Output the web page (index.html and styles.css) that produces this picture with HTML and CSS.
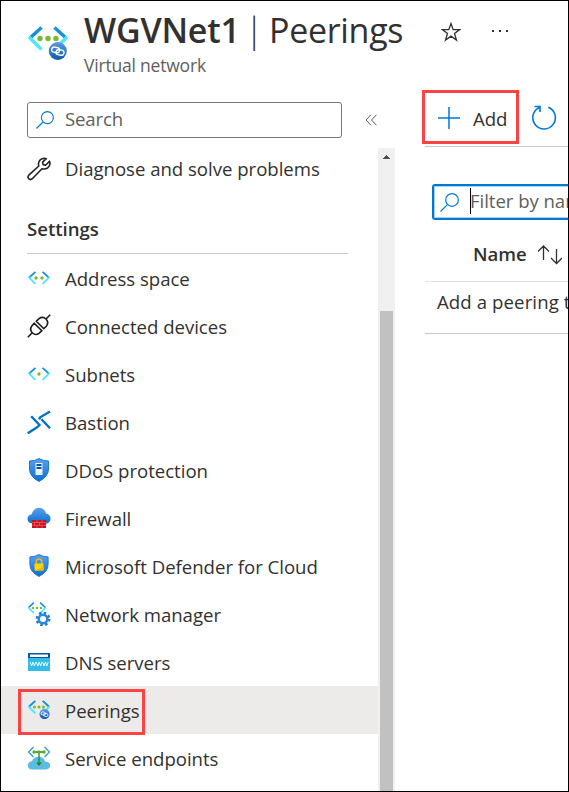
FILE: index.html
```html
<!DOCTYPE html>
<html lang="en">
<head>
<meta charset="utf-8">
<title>WGVNet1 | Peerings</title>
<link rel="stylesheet" href="styles.css">
</head>
<body>
<svg class="defs" width="0" height="0">
  <defs>
    <linearGradient id="blue" x1="0" y1="0" x2="0" y2="1"><stop offset="0" stop-color="#5ea0ef"/><stop offset="1" stop-color="#0a6fd0"/></linearGradient>
    <linearGradient id="badge" x1="0" y1="0" x2="0" y2="1"><stop offset="0" stop-color="#5b9be6"/><stop offset="1" stop-color="#0c59a4"/></linearGradient>
    <symbol id="search" viewBox="0 0 18 18"><g fill="none" stroke="#0078d4" stroke-width="1.1"><circle cx="11.4" cy="6.6" r="6"/><path d="M7 11L.5 17.5"/></g></symbol>
    <symbol id="brackets" viewBox="0 0 40 26"><g fill="none" stroke-width="3.4"><path d="M13.5 1.5L2 12" stroke="#1490df"/><path d="M1 11L13.5 23.5" stroke="#50e6ff"/><path d="M26.500 1.500L38 12" stroke="#1490df"/><path d="M39 11L26.500 23.500" stroke="#50e6ff"/></g></symbol>
    <symbol id="peering" viewBox="0 0 40 34"><use href="#brackets" width="40" height="26"/><g fill="#76bc2d"><circle cx="12" cy="12.500" r="2.700"/><circle cx="20" cy="12.500" r="2.700"/><circle cx="28" cy="12.500" r="2.700"/></g><circle cx="29.800" cy="25" r="9" fill="url(#badge)"/><g fill="none" stroke="#fff" stroke-width="1.400"><rect x="23.600" y="21.300" width="8" height="5.200" rx="2.600" transform="rotate(12 27.600 23.900)"/><rect x="28" y="23.800" width="8" height="5.200" rx="2.600" transform="rotate(12 32 26.400)"/></g></symbol>
    <symbol id="shield" viewBox="0 0 20 24"><path d="M10 .5Q14 3 19.500 3v8Q19.500 18.500 10 23.500Q.5 18.500.5 11V3Q6 3 10 .5Z" fill="url(#blue)" stroke="#1679d2"/></symbol>
  </defs>
</svg>
<div class="frame">
  <header class="header">
    <svg class="logo" width="40" height="34"><use href="#peering" width="40" height="34"/></svg>
    <div class="heading">
      <h1 class="title"><span class="name">WGVNet1</span><span class="bar">|</span><span class="section">Peerings</span></h1>
      <div class="kind">Virtual network</div>
    </div>
    <svg class="star" width="20" height="20" viewBox="0 0 20 20"><path d="M10 1.500L12.200 7.600H18.700L13.500 11.500L15.500 18L10 14.100L4.500 18L6.500 11.500L1.300 7.600H7.800Z" fill="none" stroke="#323130" stroke-width="1.300"/></svg>
    <svg class="more" width="18" height="4"><path d="M1 1h2v2H1zM8 1h2v2H8zM15 1h2v2h-2z" fill="#323130"/></svg>
  </header>
  <div class="body">
    <aside class="sidebar">
      <div class="searchrow">
        <div class="search"><svg width="18" height="18"><use href="#search"/></svg><span class="hint">Search</span></div>
        <svg class="collapse" width="12" height="12" viewBox="0 0 12 12"><path d="M6 .7L1 6l5 5.300M11.500.7l-5 5.300 5 5.300" fill="none" stroke="#605e5c"/></svg>
      </div>
      <div class="scroller">
        <nav class="menu">
          <div class="item first"><svg class="icon" viewBox="0 0 24 24"><path d="M22.500 4.200Q24 8.500 20.500 11Q17.700 12.600 15 11.700L5.300 21.700Q3.500 23.400 1.700 21.700Q.2 20 1.800 18.200L11.800 9Q10.700 5.300 13.200 2.900Q15.800.6 19.300 1.700L15.600 5.200L16.200 7.600L18.600 8.200Z" fill="none" stroke="#222" stroke-width="1.600" stroke-linejoin="round"/></svg><span>Diagnose and solve problems</span></div>
          <h2 class="group">Settings</h2>
          <div class="item"><svg class="icon" viewBox="0 0 24 24"><use href="#brackets" x="1" y="5" width="22" height="14.300"/><circle cx="9" cy="12" r="1.700" fill="#76bc2d"/><circle cx="15" cy="12" r="1.700" fill="#76bc2d"/></svg><span>Address space</span></div>
          <div class="item"><svg class="icon" viewBox="0 0 24 24"><g fill="none" stroke="#1b1a19" stroke-width="1.600"><path d="M.8 23.200L5 19M19 5L23.200.8M7.200 9.200L14.800 16.800L12 19.300Q8.500 21.800 5.500 19Q2.200 15.600 4.800 12ZM9.300 7.200L16.800 14.700L19.500 12Q22.200 8.400 19 5Q15.600 2 12 4.700Z"/></g></svg><span>Connected devices</span></div>
          <div class="item"><svg class="icon" viewBox="0 0 24 24"><use href="#brackets" x="1" y="5" width="22" height="14.300"/><circle cx="12" cy="12" r="1.700" fill="#76bc2d"/></svg><span>Subnets</span></div>
          <div class="item"><svg class="icon" viewBox="0 0 24 24"><g fill="none" stroke="#0072c6" stroke-width="2.400"><path d="M4.200 6.200L12.500 15L10.500 17M23 1.500L13.200 7.300L12 9.300M14.500 9.300L23 18.300M.7 23.300L10.500 17"/></g></svg><span>Bastion</span></div>
          <div class="item"><svg class="icon" viewBox="0 0 24 24"><use href="#shield" x="2" y="0" width="20" height="24"/><path d="M8.500 5h7v12h-7z" fill="#f2f2f2"/><path d="M9.500 6h5v2h-5zM9.500 9h5v2h-5z" fill="#005a9e"/></svg><span>DDoS protection</span></div>
          <div class="item"><svg class="icon" viewBox="0 0 24 24"><path d="M5.800 17.500C2.500 17.500.5 15.500.5 12.800C.5 10.300 2.300 8.500 4.800 8.300C5.500 4.300 8.500 1.800 12 1.800C15.700 1.800 18.300 4.200 19 7.500C21.800 7.800 23.600 9.900 23.600 12.500C23.600 15.500 21.300 17.500 18.500 17.500Z" fill="url(#blue)"/><path d="M5 14h14v8H5z" fill="#c8131d"/><path d="M5 16.500h14M5 19.300h14M10 14v2.500M15 14v2.500M7.500 16.500v2.800M12.500 16.500v2.800M10 19.300V22M15 19.300V22" stroke="#f08b91" stroke-width=".5"/></svg><span>Firewall</span></div>
          <div class="item"><svg class="icon" viewBox="0 0 24 24"><use href="#shield" x="2" y="0" width="20" height="23"/><path d="M9.300 10V7.800a2.700 2.700 0 0 1 5.400 0V10" fill="none" stroke="#f0b51c" stroke-width="1.500"/><rect x="7.500" y="9.500" width="9" height="7" rx=".7" fill="#ffd400"/><path d="M7.500 16.500h9v-4z" fill="#f5b800"/></svg><span>Microsoft Defender for Cloud</span></div>
          <div class="item"><svg class="icon" viewBox="0 0 24 24"><use href="#brackets" x=".5" y="0" width="19" height="12.300"/><g fill="#76bc2d"><circle cx="6" cy="5.900" r="1.200"/><circle cx="10" cy="5.900" r="1.200"/><circle cx="14" cy="5.900" r="1.200"/></g><circle cx="16" cy="17" r="6.100" fill="none" stroke="#187bd5" stroke-width="2.600" stroke-dasharray="2.400 2.391"/><circle cx="16" cy="17" r="4.300" fill="#fff" stroke="#2988df" stroke-width="2.500"/></svg><span>Network manager</span></div>
          <div class="item"><svg class="icon" viewBox="0 0 24 24"><path d="M1 3h22v6H1z" fill="#0059a3"/><path d="M3 4.500h18v2.500H3z" fill="#fff"/><path d="M1 8h22v13H1z" fill="#32bce8"/><path d="M3.200 12l1.400 4 1.400-4 1.400 4 1.400-4M9.400 12l1.400 4 1.400-4 1.400 4 1.400-4M15.600 12l1.400 4 1.400-4 1.400 4 1.400-4" fill="none" stroke="#fff" stroke-width=".9"/></svg><span>DNS servers</span></div>
          <div class="item current"><svg class="icon" viewBox="0 0 24 24"><use href="#peering" x=".7" y="2" width="22.600" height="19.200"/></svg><span>Peerings</span><i class="mark"></i></div>
          <div class="item"><svg class="icon" viewBox="0 0 24 24"><g fill="none" stroke="#2c93cc" stroke-width="1.200"><path d="M6.500 1L1.500 6l5 5M17.500 1l5 5-5 5"/></g><path d="M5.500 23.500C2.500 23.500.8 21.700.8 19.400C.8 17 2.500 15.300 5 15.200C5.800 12.300 8.500 10.800 11.500 10.800C15 10.800 17.500 12.500 18 15.500C21.300 15.600 23.200 17.200 23.200 19.600C23.200 22 21.200 23.500 18.500 23.500Z" fill="#5bbbe0"/><g fill="none" stroke="#1b8a24" stroke-width="1.300"><path d="M7 6h10M12 6v12M10 16.500l2 2.500 2-2.500"/></g><g fill="#5daf20"><circle cx="7" cy="6" r="1.700"/><circle cx="12" cy="6" r="1.700"/><circle cx="17" cy="6" r="1.700"/></g></svg><span>Service endpoints</span></div>
        </nav>
        <div class="track"><svg width="7" height="4"><path d="M3 0h1v1h1v1h1v1h1v1H0V3h1V2h1V1h1z" fill="#505050"/></svg><div class="thumb"></div></div>
      </div>
    </aside>
    <main class="content">
      <div class="toolbar">
        <svg class="plus" width="24" height="24"><path d="M1 12h22M12 1v22" stroke="#0078d4" stroke-width="1.500"/></svg><span class="add">Add</span>
        <svg class="refresh" width="26" height="26" viewBox="0 0 26 26"><path d="M17.300 2.200A11.300 11.300 0 1 1 8.400 2.400M3.500 1.500H9V7" fill="none" stroke="#0078d4" stroke-width="1.600"/></svg>
        <i class="mark"></i>
      </div>
      <div class="filter"><svg width="19" height="19"><use href="#search"/></svg><i class="caret"></i><span class="hint">Filter by name...</span></div>
      <div class="columns"><b>Name</b><svg width="24" height="20" viewBox="0 0 24 20"><path d="M5.500 15V1M0 6.500L5.500 1 11 6.500M18.500 4v14.500M13 13l5.500 5.500L24 13" fill="none" stroke="#323130" stroke-width="1.300"/></svg></div>
      <div class="empty">Add a peering to get started</div>
    </main>
  </div>
</div>
</body>
</html>
```

FILE: styles.css
```css
* { box-sizing: border-box; }
body { margin: 0; background: #fff; color: #323130; font-family: "Open Sans", "Noto Sans", sans-serif; font-size: 18.6px; letter-spacing: -.02px; }
svg { display: block; flex: none; }
.defs { position: absolute; }
.frame { width: 569px; height: 792px; border: 1px solid #000; overflow: hidden; }
.header { height: 91px; display: flex; }
.logo { margin: 25px 16px 0 27px; }
.heading { width: 357px; }
.title { margin: 4px 0 0; height: 50px; line-height: 50px; font-size: 34px; font-weight: 400; display: flex; white-space: nowrap; }
.name { width: 161px; font-weight: 600; letter-spacing: -.2px; }
.bar { width: 24px; font-weight: 300; }
.section { letter-spacing: -.3px; }
.kind { margin-top: -1px; line-height: 22px; color: #605e5c; font-size: 17.5px; letter-spacing: -.2px; }
.star { margin-top: 21px; }
.more { margin: 28px 0 0 30px; }
.body { display: flex; height: 699px; }
.sidebar { width: 394px; display: flex; flex-direction: column; }
.searchrow { display: flex; height: 56px; padding: 10px 0 0 26px; }
.search { width: 315px; height: 36px; border: 1px solid #7a7876; border-radius: 3px; display: flex; align-items: center; padding: 0 8px; gap: 11px; }
.hint { color: #605e5c; white-space: nowrap; }
.search .hint { padding-bottom: 3px; letter-spacing: -.15px; }
.collapse { margin: 12px 0 0 23px; }
.scroller { flex: 1; display: flex; overflow: hidden; }
.menu { width: 377px; }
.item { height: 48px; display: flex; align-items: center; gap: 14px; padding-left: 26px; position: relative; white-space: nowrap; }
.item span { line-height: 28px; padding-top: 1px; }
.icon { width: 24px; height: 24px; }
.first { height: 42px; }
.first span { padding: 0 0 1px; }
.group { margin: 0 30px 0 26px; height: 64px; padding-top: 25px; border-bottom: 1px solid #c8c6c4; font-size: 18.6px; line-height: 28px; font-weight: 600; }
.current { background: #edebe9; }
.mark { position: absolute; border: 3px solid #fc4343; }
.current .mark { left: 17px; top: 3px; width: 127px; height: 46px; }
.track { width: 17px; background: #f0f0f0; display: flex; flex-direction: column; align-items: center; padding-top: 7px; }
.thumb { width: 13px; flex: 1; margin-top: 152px; background: #c1c1c1; }
.content { flex: 1; margin-left: 30px; min-width: 0; overflow: visible; }
.toolbar { height: 55px; border-bottom: 1px solid #c8c6c4; position: relative; display: flex; align-items: center; padding-left: 12px; }
.add { margin-left: 12px; width: 59px; padding-bottom: 2px; }
.toolbar .mark { left: -3px; top: -2px; width: 97px; height: 54px; }
.plus, .refresh { margin-bottom: 2px; }
.refresh { margin-left: -1px; }
.filter { margin: 37px 0 0 7px; width: 220px; height: 36px; border: 2px solid #0078d4; border-radius: 3px; box-shadow: inset 0 0 0 1px #a9d3f2; display: flex; align-items: center; padding-left: 6px; }
.caret { width: 1px; height: 26px; margin: -2px -1px 0 11px; background: #000; }
.filter .hint { padding-bottom: 3px; letter-spacing: -.05px; }
.columns { height: 62px; border-bottom: 1px solid #e5e3e1; display: flex; gap: 11px; padding: 21px 0 0 48px; }
.columns b { font-weight: 600; line-height: 26px; }
.columns svg { margin-top: 4px; }
.empty { height: 52px; border-bottom: 1px solid #c8c6c4; padding: 6px 0 0 12px; line-height: 28px; white-space: nowrap; overflow: hidden; letter-spacing: .1px; }
```
